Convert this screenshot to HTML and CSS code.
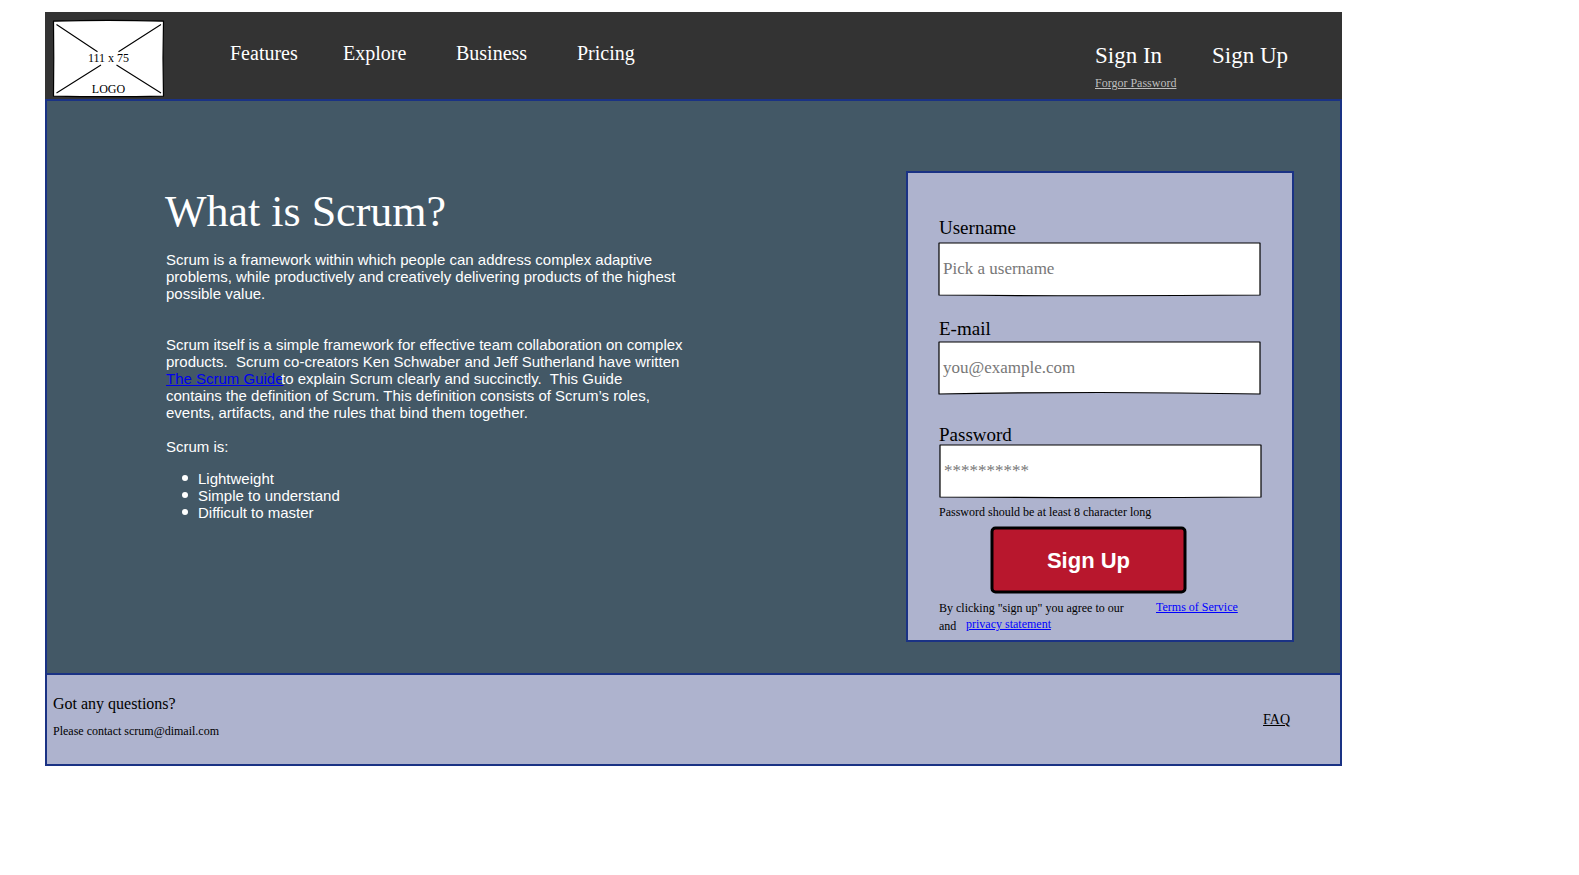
FILE: index.html
```html
<!DOCTYPE html>
<html lang="en">
<head>
<meta charset="utf-8">
<title>What is Scrum?</title>
<link rel="stylesheet" href="styles.css">
</head>
<body>
<div class="page">
  <header class="header">
    <svg class="logo" width="114" height="80" viewBox="0 0 114 80">
      <path class="logo-frame" d="M1.5 3.2 Q56 1.5 111.5 3.2 Q110.5 40 111.5 78.2 Q56 79.2 1.5 78.2 Q2 40 1.5 3.2 Z"/>
      <path class="logo-cross" d="M4.5 6.5 L45.500 33.800 M109 6.5 L66.500 33.800 M4.500 75 L49 47 M109 75 L64.500 47"/>
      <text x="56.500" y="44" text-anchor="middle">111 x 75</text>
      <text x="56.500" y="75" text-anchor="middle">LOGO</text>
    </svg>
    <nav class="nav">
      <a>Features</a><a>Explore</a><a>Business</a><a>Pricing</a>
    </nav>
    <div class="account">
      <a class="account-link">Sign In</a>
      <a class="account-link">Sign Up</a>
      <a class="forgot">Forgor Password</a>
    </div>
  </header>

  <main class="main">
    <section class="intro">
      <h1>What is Scrum?</h1>
      <p>Scrum is a framework within which people can address complex adaptive<br>problems, while productively and creatively delivering products of the highest<br>possible value.</p>
      <p class="details">Scrum itself is a simple framework for effective team collaboration on complex<br>products.&nbsp; Scrum co-creators Ken Schwaber and Jeff Sutherland have written<br><a class="guide">The Scrum Guide</a>to explain Scrum clearly and succinctly.&nbsp; This Guide<br>contains the definition of Scrum. This definition consists of Scrum’s roles,<br>events, artifacts, and the rules that bind them together.</p>
      <p class="lead">Scrum is:</p>
      <ul class="traits">
        <li>Lightweight</li>
        <li>Simple to understand</li>
        <li>Difficult to master</li>
      </ul>
    </section>

    <form class="card">
      <label class="label">Username</label>
      <div class="field field-username">
        <svg width="324" height="55"><path d="M1 1 H322 V53 Q161.500 54.500 1 53 Z"/></svg>
        <span>Pick a username</span>
      </div>
      <label class="label label-email">E-mail</label>
      <div class="field field-email">
        <svg width="324" height="55"><path d="M1 1 H322 V53 Q161.500 50 1 53 Z"/></svg>
        <span>you@example.com</span>
      </div>
      <label class="label label-password">Password</label>
      <div class="field field-password">
        <svg width="324" height="55"><path d="M1 1 H322 V53 Q161.500 54.200 1 53 Z"/></svg>
        <span>**********</span>
      </div>
      <p class="hint">Password should be at least 8 character long</p>
      <div class="submit">
        <svg width="197" height="68"><rect x="2" y="2" width="193" height="64" rx="3.500"/></svg>
        <span>Sign Up</span>
      </div>
      <div class="terms">
        <span class="terms-text">By clicking "sign up" you agree to our</span><a>Terms of Service</a>
      </div>
      <div class="terms terms-second">
        <span class="terms-text">and</span><a>privacy statement</a>
      </div>
    </form>
  </main>

  <footer class="footer">
    <div>
      <p class="question">Got any questions?</p>
      <p class="contact">Please contact scrum@dimail.com</p>
    </div>
    <a class="faq">FAQ</a>
  </footer>
</div>
</body>
</html>
```

FILE: styles.css
```css
* { box-sizing: border-box; }

body {
  margin: 0;
  background: #fff;
  color: #000;
  font-family: "Liberation Serif", "Times New Roman", serif;
}

h1, p, ul { margin: 0; font-weight: normal; }

svg { display: block; }

.page { width: 1297px; margin: 12px 0 0 45px; }

/* Header */
.header {
  display: flex;
  height: 87px;
  padding-left: 7px;
  background: #333;
  color: #fff;
}

.logo { margin-top: 6px; flex: none; font-size: 12px; }
.logo-frame { fill: #fff; stroke: #000; stroke-width: 1.2; stroke-linejoin: round; }
.logo-cross { fill: none; stroke: #000; stroke-width: 1.1; }

.nav {
  display: grid;
  grid-template-columns: 113px 113px 121px auto;
  margin-left: 64px;
  padding-top: 29px;
  font-size: 20px;
  line-height: 24px;
}

.account {
  display: grid;
  grid-template-columns: 117px auto;
  align-content: start;
  row-gap: 7px;
  width: 247px;
  margin-left: auto;
  padding-top: 31px;
}
.account-link { font-size: 23px; line-height: 26px; }
.forgot {
  color: #bfbfbf;
  font-size: 12px;
  line-height: 14px;
  text-decoration: underline;
}

/* Main area */
.main {
  display: flex;
  justify-content: space-between;
  align-items: flex-start;
  height: 576px;
  padding: 70px 46px 0 119px;
  border: 2px solid #1a3284;
  background: #435866;
}

.intro {
  padding-top: 16px;
  color: #fff;
  font: 15px/17px "Liberation Sans", Arial, sans-serif;
  white-space: nowrap;
}
.intro h1 {
  margin: 0 0 14px -1px;
  font: 44px/50px "Liberation Serif", "Times New Roman", serif;
}
.details { margin-top: 34px; }
.guide { margin-right: -2.5px; color: #00e; text-decoration: underline; }
.lead { margin-top: 17px; }

.traits { margin-top: 15px; padding: 0; list-style: none; }
.traits li { display: flex; align-items: center; gap: 10px; padding-left: 16px; }
.traits li::before {
  content: "";
  width: 6px;
  height: 6px;
  margin-bottom: 1px;
  border-radius: 50%;
  background: #fff;
}

/* Sign-up card */
.card {
  width: 388px;
  height: 471px;
  padding: 44px 0 0 31px;
  border: 2px solid #1a3284;
  background: #aeb3ce;
}

.label { display: block; font-size: 19px; line-height: 21px; }
.label-email { margin-top: 21px; }
.label-password { margin-top: 28px; }

.field { display: grid; margin-left: -1px; }
.field > *, .submit > * { grid-area: 1 / 1; }
.field path { fill: #fff; stroke: #000; stroke-width: 1.2; stroke-linejoin: round; }
.field span {
  padding: 17px 0 0 5px;
  color: #777;
  font-size: 17px;
  line-height: 19px;
}
.field-username { margin-top: 4px; }
.field-email { margin-top: 2px; }
.field-password { margin-top: -1px; margin-left: 0; }

.hint { margin-top: 6px; font-size: 12px; line-height: 14px; }

.submit { display: grid; width: 197px; margin: 7px 0 0 51px; }
.submit rect { fill: #b8172d; stroke: #000; stroke-width: 3; }
.submit span {
  padding-top: 22px;
  color: #fff;
  font: bold 22px/25px "Liberation Sans", Arial, sans-serif;
  text-align: center;
}

.terms {
  display: grid;
  grid-template-columns: 217px auto;
  margin-top: 6px;
  font-size: 12px;
  line-height: 14px;
}
.terms-second { grid-template-columns: 27px auto; margin-top: 2px; }
.terms-text { padding-top: 1px; }
.terms-second .terms-text { padding-top: 2px; }
.terms a { color: #00f; text-decoration: underline; }

/* Footer */
.footer {
  display: flex;
  justify-content: space-between;
  align-items: flex-start;
  height: 91px;
  padding: 20px 50px 0 6px;
  border: solid #1a3284;
  border-width: 0 2px 2px;
  background: #aeb3ce;
}
.question { font-size: 16px; line-height: 18px; }
.contact { margin-top: 11px; font-size: 12px; line-height: 14px; }
.faq { margin-top: 17px; font-size: 14px; line-height: 16px; text-decoration: underline; }
```
